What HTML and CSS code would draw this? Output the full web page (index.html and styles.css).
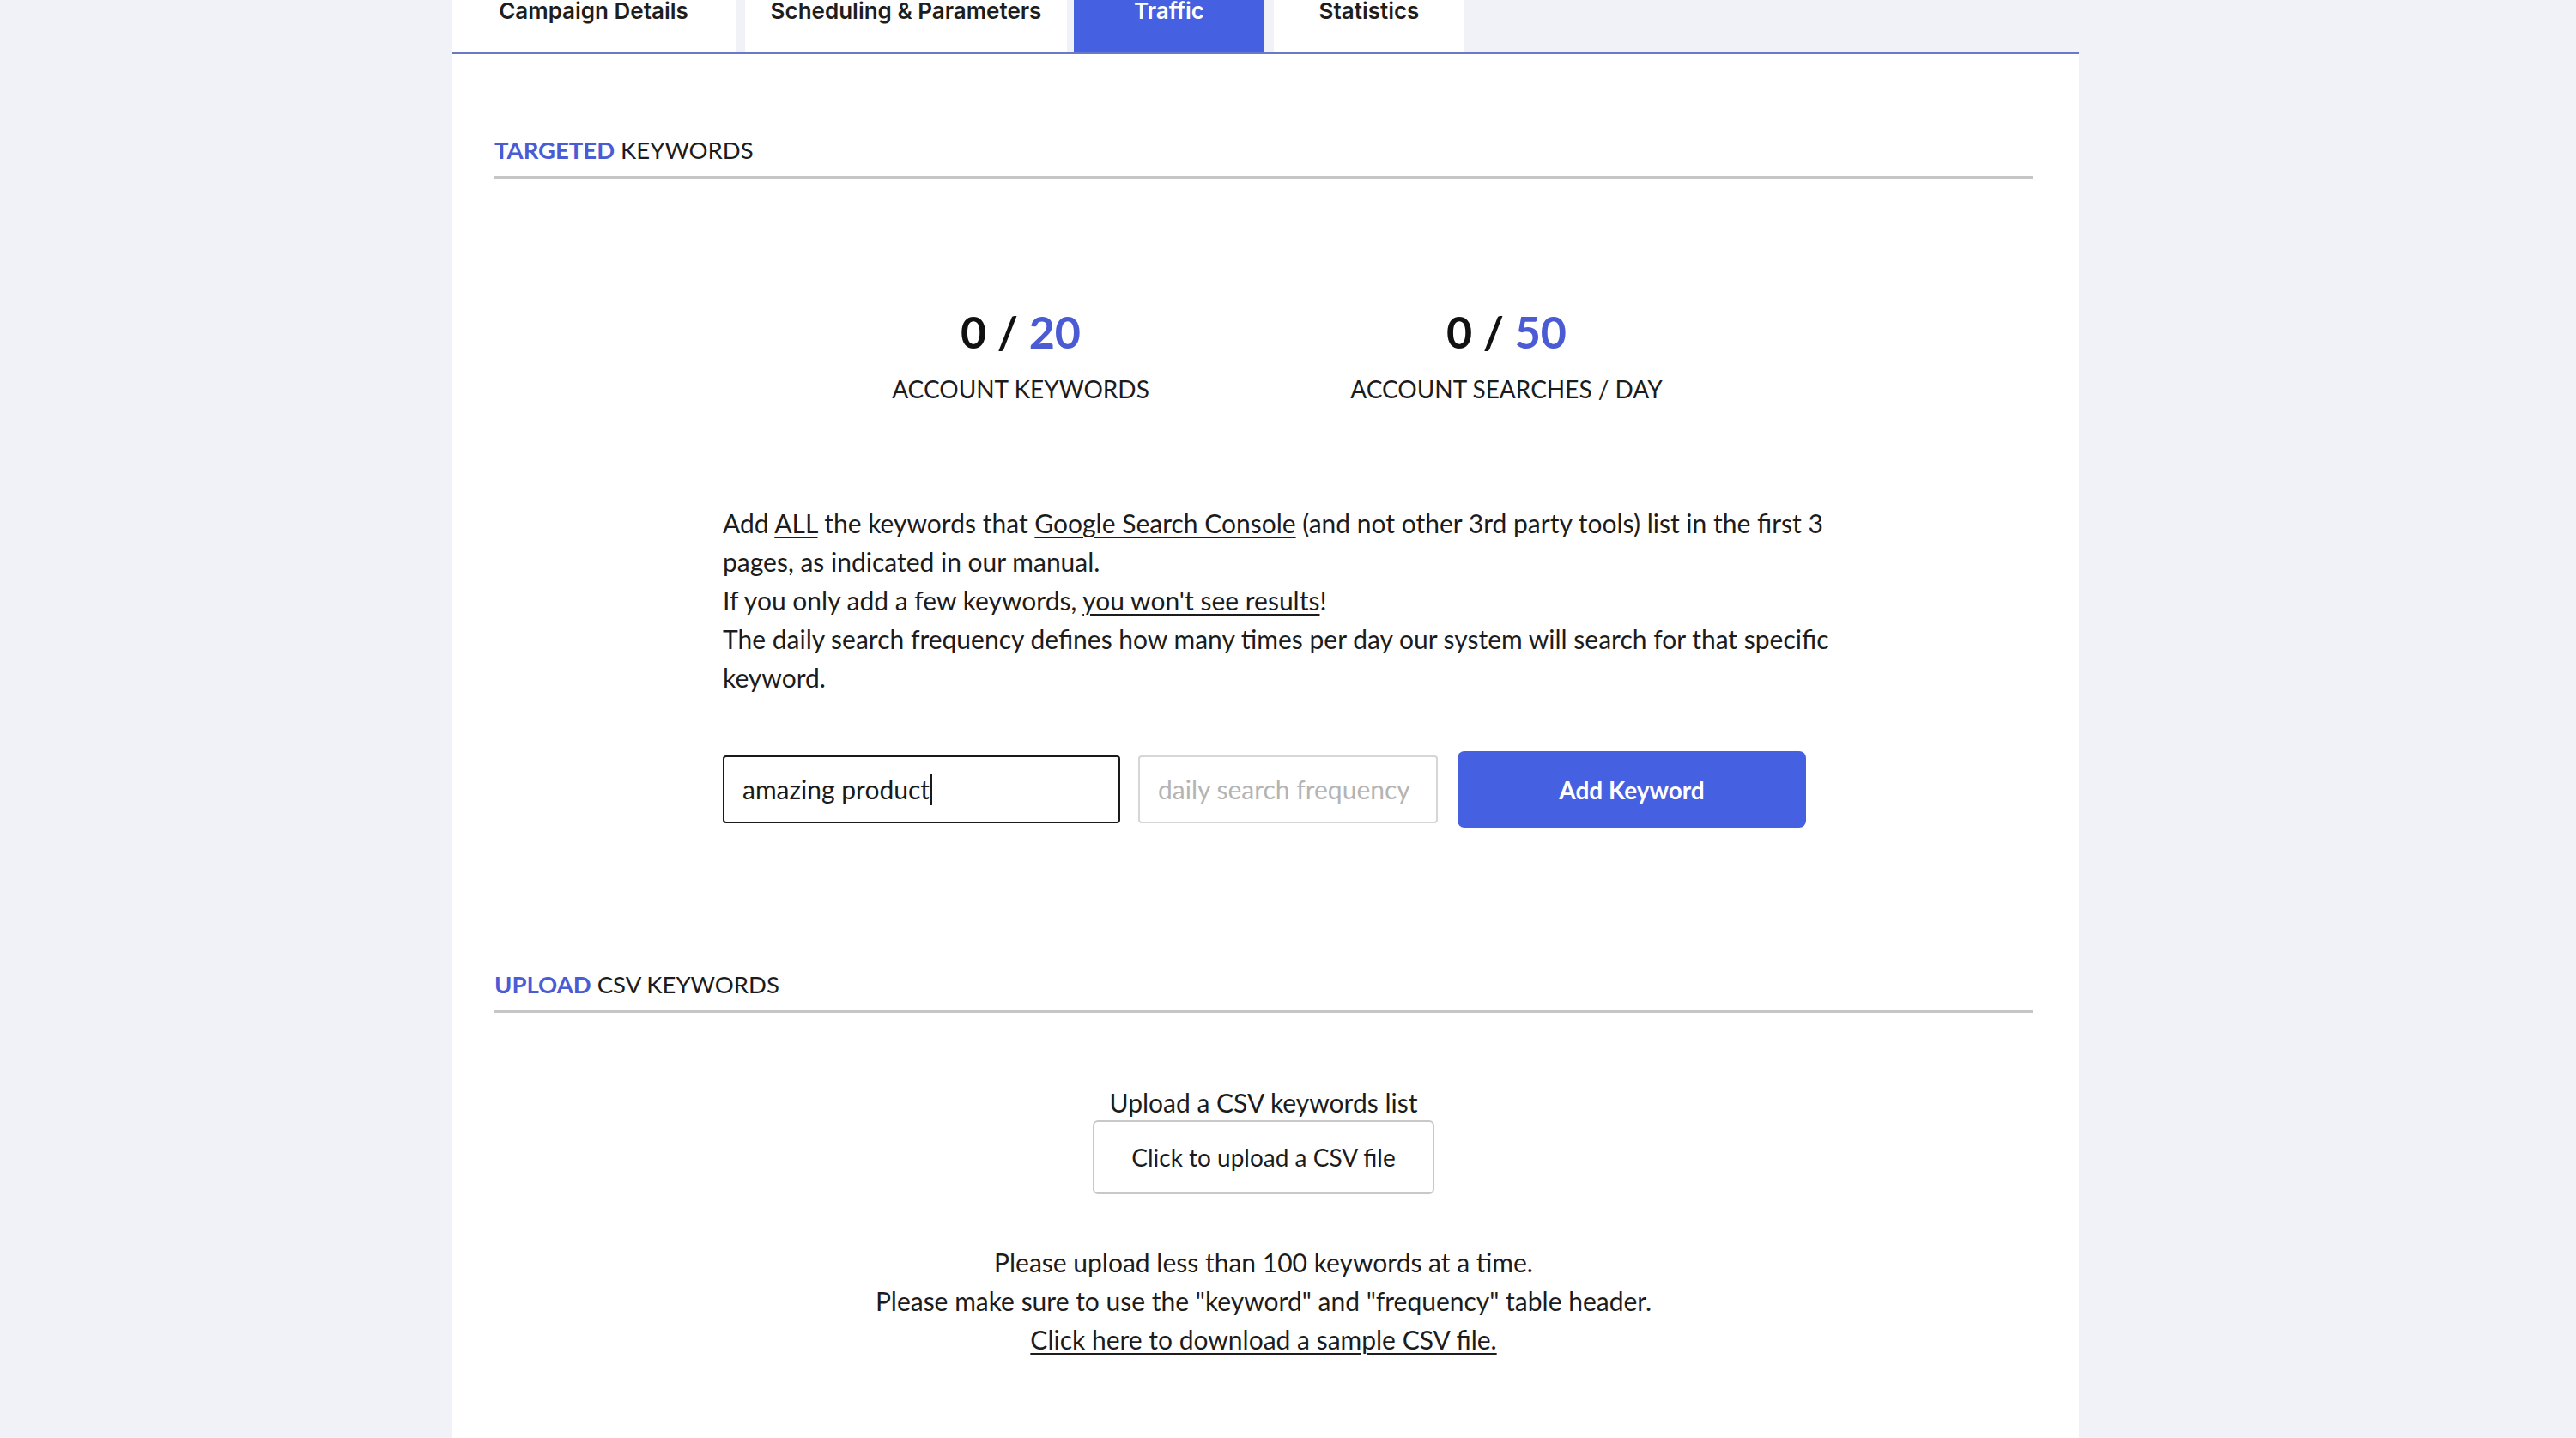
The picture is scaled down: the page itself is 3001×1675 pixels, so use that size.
FILE: index.html
```html
<!DOCTYPE html>
<html lang="en">
<head>
<meta charset="utf-8">
<title>Traffic</title>
<link rel="stylesheet" href="styles.css">
</head>
<body>
<div class="page">
  <nav class="tabs">
    <div class="tab tab-campaign">Campaign Details</div>
    <div class="tab tab-sched">Scheduling &amp; Parameters</div>
    <div class="tab tab-traffic active">Traffic</div>
    <div class="tab tab-stats">Statistics</div>
  </nav>
  <main class="card">
    <h2 class="section-title"><span class="accent">TARGETED</span> KEYWORDS</h2>

    <div class="stats">
      <div class="stat">
        <div class="stat-num">0 / <span class="accent">20</span></div>
        <div class="stat-label">ACCOUNT KEYWORDS</div>
      </div>
      <div class="stat">
        <div class="stat-num">0 / <span class="accent">50</span></div>
        <div class="stat-label">ACCOUNT SEARCHES / DAY</div>
      </div>
    </div>

    <div class="form-wrap">
      <p class="intro">Add <u>ALL</u> the keywords that <u>Google Search Console</u> (and not other 3rd party tools) list in the first 3<br>pages, as indicated in our manual.<br>If you only add a few keywords, <u>you won't see results</u>!<br>The daily search frequency defines how many times per day our system will search for that specific<br>keyword.</p>

      <div class="kw-row">
        <div class="field field-kw">amazing product<span class="caret"></span></div>
        <div class="field field-freq">daily search frequency</div>
        <button class="btn-add">Add Keyword</button>
      </div>
    </div>

    <h2 class="section-title section-upload"><span class="accent">UPLOAD</span> CSV KEYWORDS</h2>

    <div class="upload">
      <div class="upload-label">Upload a CSV keywords list</div>
      <button class="btn-upload">Click to upload a CSV file</button>
      <p class="upload-notes">Please upload less than 100 keywords at a time.<br>Please make sure to use the "keyword" and "frequency" table header.<br><u>Click here to download a sample CSV file.</u></p>
    </div>
  </main>
</div>
</body>
</html>
```

FILE: styles.css
```css
html, body {
  margin: 0;
  padding: 0;
}
body {
  background: #f0f2f7;
  font-family: "Lato", "Open Sans", sans-serif;
  color: #1c1c1c;
  overflow: hidden;
  height: 1675px;
}
.page {
  width: 1896px;
  margin-left: 526px;
}
.tabs {
  display: flex;
  margin-top: -30px;
  height: 90px;
  border-bottom: 3px solid #6a78c8;
}
.tab {
  background: #ffffff;
  font-family: "Inter", "Liberation Sans", sans-serif;
  font-weight: 600;
  font-size: 26px;
  line-height: 32px;
  color: #1e1e1e;
  text-align: center;
  padding-top: 27px;
  box-sizing: border-box;
  height: 90px;
  margin-right: 11px;
}
.tab-campaign { width: 331px; }
.tab-sched { width: 375px; margin-right: 8px; }
.tab-traffic { width: 222px; }
.tab-stats { width: 222px; }
.tab.active {
  background: #4560e0;
  color: #ffffff;
}
.accent {
  color: #4a5bd4;
}
.card {
  background: #ffffff;
  padding: 94px 54px 120px 50px;
  min-height: 1700px;
}
.section-title {
  margin: 0;
  font-size: 27.5px;
  line-height: 36px;
  font-weight: 400;
  padding-bottom: 12px;
  border-bottom: 3px solid #c6c6c6;
}
.section-title .accent {
  font-weight: 700;
}
.stats {
  display: flex;
  justify-content: center;
  margin-top: 144px;
}
.stat {
  width: 566px;
  text-align: center;
}
.stat-num {
  font-size: 52px;
  line-height: 68px;
  font-weight: 700;
  color: #111;
}
.stat-label {
  margin-top: 14px;
  font-size: 28px;
  line-height: 38px;
}
.form-wrap {
  width: 1262px;
  margin: 115px 0 0 266px;
}
.intro {
  margin: 0;
  width: 1340px;
  font-size: 30px;
  line-height: 45px;
  color: #1c1c1c;
}
.intro u {
  text-underline-offset: 4px;
  text-decoration-thickness: 2px;
}
.kw-row {
  display: flex;
  align-items: center;
  margin-top: 63px;
  height: 89px;
}
.field {
  box-sizing: border-box;
  height: 79px;
  border-radius: 4px;
  font-size: 30px;
  line-height: 75px;
  padding: 0 21px;
  display: flex;
  align-items: center;
}
.field-kw {
  width: 463px;
  border: 2px solid #1a1a1a;
  color: #1a1a1a;
}
.caret {
  display: inline-block;
  width: 2px;
  height: 36px;
  background: #1a1a1a;
  margin-left: 1px;
}
.field-freq {
  width: 349px;
  margin-left: 21px;
  border: 2px solid #d6d6d6;
  color: #b4b4b4;
}
.btn-add {
  width: 406px;
  height: 89px;
  margin-left: 23px;
  border: none;
  border-radius: 8px;
  background: #4660e2;
  color: #ffffff;
  font-family: "Lato", "Open Sans", sans-serif;
  font-weight: 700;
  font-size: 28px;
}
.section-upload {
  margin-top: 165px;
}
.upload {
  display: flex;
  flex-direction: column;
  align-items: center;
  margin-top: 85px;
}
.upload-label {
  font-size: 30px;
  line-height: 38px;
}
.btn-upload {
  margin-top: 2px;
  width: 398px;
  height: 86px;
  background: #ffffff;
  border: 2px solid #c8c8c8;
  border-radius: 6px;
  font-family: "Lato", "Open Sans", sans-serif;
  font-size: 28px;
  color: #1c1c1c;
}
.upload-notes {
  margin: 57px 0 0 0;
  text-align: center;
  font-size: 30px;
  line-height: 45px;
}
.upload-notes u {
  text-underline-offset: 4px;
  text-decoration-thickness: 2px;
}
```
